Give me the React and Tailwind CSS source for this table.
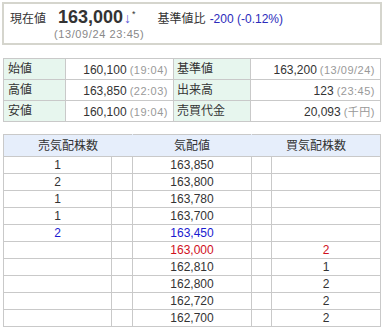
import React from 'react';

const font = { fontFamily: '"Liberation Sans", "Noto Sans CJK JP", sans-serif' };

const info = [
  ['始値', '160,100', '(19:04)', '基準値', '163,200', '(13/09/24)'],
  ['高値', '163,850', '(22:03)', '出来高', '123', '(23:45)'],
  ['安値', '160,100', '(19:04)', '売買代金', '20,093', '(千円)'],
];

// sell, price, buy, color
const board = [
  ['1', '163,850', '', ''],
  ['2', '163,800', '', ''],
  ['1', '163,780', '', ''],
  ['1', '163,700', '', ''],
  ['2', '163,450', '', 'blue'],
  ['', '163,000', '2', 'red'],
  ['', '162,810', '1', ''],
  ['', '162,800', '2', ''],
  ['', '162,720', '2', ''],
  ['', '162,700', '2', ''],
];

function tone(c) {
  if (c === 'blue') return 'text-[#1a1ad0]';
  if (c === 'red') return 'text-[#d0101c]';
  return 'text-[#333333]';
}

export default function App() {
  return (
    <div className="w-[384px] h-[329px] bg-white overflow-hidden text-[#333333]" style={font}>
      {/* current price box */}
      <div className="ml-[2px] mt-[2px] w-[380px] h-[43px] border-2 border-[#d5d5cd] px-[4px]">
        <div className="flex items-baseline h-[24px] pt-[3px] leading-[20px]">
          <span className="text-[12px] ml-[2px]">現在値</span>
          <span className="text-[18px] font-bold ml-[12px]">163,000</span>
          <span className="text-[14px] text-[#5a5ad8] ml-[1px]">↓</span>
          <span className="text-[9px] ml-[1px] self-start leading-[14px]">*</span>
          <span className="text-[12px] ml-[22px]">基準値比</span>
          <span className="text-[12px] ml-[4px] text-[#2b2bbb]">-200 (-0.12%)</span>
        </div>
        <div className="text-[11px] text-[#888888] pl-[46px] leading-[13px] tracking-[0.6px]">(13/09/24 23:45)</div>
      </div>

      {/* summary table */}
      <table className="ml-[3px] mt-[13px] w-[377px] border-collapse table-fixed leading-[15px]">
        <colgroup>
          <col className="w-[62px]" />
          <col className="w-[108px]" />
          <col className="w-[77px]" />
          <col className="w-[130px]" />
        </colgroup>
        <tbody>
          {info.map((r) => (
            <tr key={r[0]}>
              <td className="h-[21px] border border-[#c9c9c9] bg-[#e7f6ee] text-[12px] pl-[4px] p-0">{r[0]}</td>
              <td className="h-[21px] border border-[#c9c9c9] text-right pr-[5px] p-0 whitespace-nowrap">
                <span className="text-[12px]">{r[1]}</span>
                <span className="text-[11px] text-[#999999] ml-[3px] tracking-[0.5px]">{r[2]}</span>
              </td>
              <td className="h-[21px] border border-[#c9c9c9] bg-[#e7f6ee] text-[12px] pl-[3px] p-0">{r[3]}</td>
              <td className="h-[21px] border border-[#c9c9c9] text-right pr-[5px] p-0 whitespace-nowrap">
                <span className="text-[12px]">{r[4]}</span>
                <span className="text-[11px] text-[#999999] ml-[3px] tracking-[0.5px]">{r[5]}</span>
              </td>
            </tr>
          ))}
        </tbody>
      </table>

      {/* order board */}
      <table className="ml-[3px] mt-[12px] w-[377px] border-collapse table-fixed leading-[14px]">
        <colgroup>
          <col className="w-[108px]" />
          <col className="w-[21px]" />
          <col className="w-[119px]" />
          <col className="w-[20px]" />
          <col className="w-[109px]" />
        </colgroup>
        <thead>
          <tr className="bg-[#e6eefb]">
            <th colSpan={2} className="h-[22px] border border-[#c9c9c9] border-r-[#e6eefb] font-normal text-[12px] p-0">売気配株数</th>
            <th className="h-[22px] border border-[#c9c9c9] border-x-[#e6eefb] font-normal text-[12px] p-0">気配値</th>
            <th colSpan={2} className="h-[22px] border border-[#c9c9c9] border-l-[#e6eefb] font-normal text-[12px] p-0">買気配株数</th>
          </tr>
        </thead>
        <tbody>
          {board.map((r) => (
            <tr key={r[1]} className={`text-[12px] ${tone(r[3])}`}>
              <td className="h-[17px] border border-[#c9c9c9] text-center p-0">{r[0]}</td>
              <td className="h-[17px] border border-[#c9c9c9] p-0" />
              <td className="h-[17px] border border-[#c9c9c9] text-center p-0">{r[1]}</td>
              <td className="h-[17px] border border-[#c9c9c9] p-0" />
              <td className="h-[17px] border border-[#c9c9c9] text-center p-0">{r[2]}</td>
            </tr>
          ))}
        </tbody>
      </table>
    </div>
  );
}
